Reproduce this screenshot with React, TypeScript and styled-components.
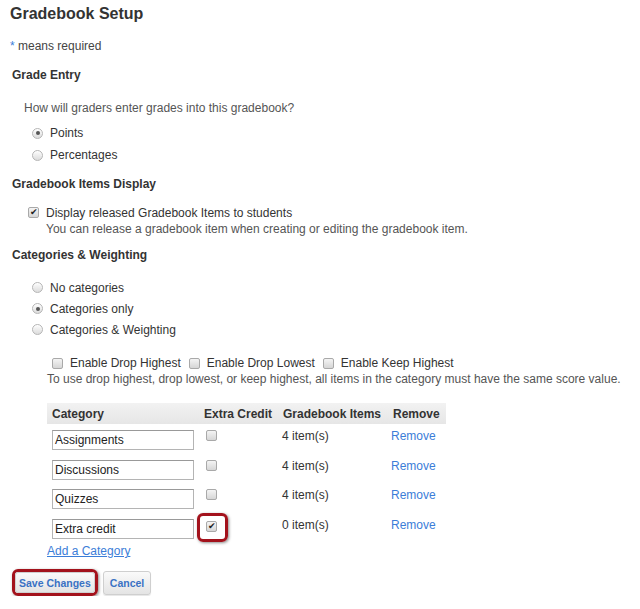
import React from "react";
import styled, { createGlobalStyle, css } from "styled-components";

const GlobalStyle = createGlobalStyle`
  body {
    margin: 0;
    background: #fff;
    font-family: "Liberation Sans", Arial, sans-serif;
    font-size: 12px;
    color: #333;
  }
`;

const Page = styled.div`
  padding: 4px 10px 0 10px;
`;

const Title = styled.h1`
  margin: 0;
  font-size: 16px;
  line-height: 20px;
  font-weight: bold;
  color: #333;
`;

const Required = styled.p`
  margin: 14px 0 0;
  line-height: 16px;
  color: #444;
  span {
    color: #3b7dd8;
  }
`;

const Heading = styled.h2<{ $top: number }>`
  margin: ${(p) => p.$top}px 0 0 2px;
  font-size: 12px;
  line-height: 16px;
  font-weight: bold;
  color: #333;
`;

const Question = styled.p`
  margin: 17px 0 0 14px;
  line-height: 16px;
  color: #555;
`;

const OptionList = styled.div<{ $top: number; $row: number }>`
  margin: ${(p) => p.$top}px 0 0 22px;
  display: flex;
  flex-direction: column;
  > label {
    height: ${(p) => p.$row}px;
  }
`;

const Option = styled.label`
  display: flex;
  align-items: center;
  gap: 7px;
  color: #333;
`;

const Radio = styled.span<{ $on?: boolean }>`
  width: 11px;
  height: 11px;
  border-radius: 50%;
  box-sizing: border-box;
  border: 1px solid #b5b5b5;
  background: linear-gradient(#fdfdfd, #dcdcdc);
  box-shadow: inset 0 1px 1px rgba(255, 255, 255, 0.8);
  display: inline-flex;
  align-items: center;
  justify-content: center;
  flex: none;
  ${(p) =>
    p.$on &&
    css`
      &::before {
        content: "";
        width: 4px;
        height: 4px;
        border-radius: 50%;
        background: #555;
      }
    `}
`;

const Box = styled.span<{ $ring?: boolean }>`
  position: relative;
  width: 11px;
  height: 11px;
  box-sizing: border-box;
  border: 1px solid #a9a9a9;
  border-radius: 2px;
  background: linear-gradient(#f4f4f4, #d6d6d6);
  display: inline-flex;
  align-items: center;
  justify-content: center;
  flex: none;
  font-size: 9px;
  line-height: 1;
  color: #222;
  ${(p) =>
    p.$ring &&
    css`
      &::after {
        content: "";
        position: absolute;
        left: -10px;
        top: -9px;
        width: 25px;
        height: 23px;
        border: 3px solid #a3121c;
        border-radius: 6px;
        box-shadow: 1px 1px 3px rgba(0, 0, 0, 0.45);
      }
    `}
`;

const CheckRow = styled.div`
  margin: 13px 0 0 18px;
  display: flex;
  gap: 7px;
  line-height: 16px;
  > span:first-child {
    margin-top: 2px;
  }
`;

const Hint = styled.div`
  color: #555;
  line-height: 16px;
`;

const DropOptions = styled.div`
  margin: 15px 0 0 37px;
  line-height: 16px;
`;

const DropRow = styled.div`
  margin-left: 5px;
  display: flex;
  align-items: center;
  gap: 8px;
  > label {
    display: flex;
    align-items: center;
    gap: 7px;
  }
`;

const DropHint = styled.div`
  color: #555;
`;

const Table = styled.table`
  margin: 16px 0 0 37px;
  border-collapse: collapse;
  table-layout: fixed;
  width: 399px;
`;

const HeadCell = styled.th<{ $w: number }>`
  width: ${(p) => p.$w}px;
  height: 21px;
  padding: 0 0 0 5px;
  box-sizing: border-box;
  text-align: left;
  white-space: nowrap;
  font-size: 12px;
  font-weight: bold;
  color: #333;
  background: linear-gradient(#f2f2f2, #e6e6e6);
`;

const Cell = styled.td<{ $pl?: number }>`
  padding: 6px 0 3.5px ${(p) => p.$pl ?? 5}px;
  vertical-align: top;
  line-height: 12px;
  white-space: nowrap;
`;

const NameInput = styled.div`
  width: 142px;
  height: 20px;
  box-sizing: border-box;
  border: 1px solid #b4b4b4;
  border-top-color: #999;
  padding: 0 2px;
  line-height: 19px;
  font-size: 12px;
  color: #222;
  background: #fff;
`;

const Link = styled.a`
  color: #3b7dd8;
  text-decoration: none;
  cursor: pointer;
`;

const AddLink = styled(Link)`
  display: block;
  margin: 1px 0 0 37px;
  line-height: 16px;
  text-decoration: underline;
`;

const Buttons = styled.div`
  margin: 10px 0 0 2px;
  display: flex;
  align-items: center;
  gap: 5px;
`;

const Ring = styled.span`
  display: inline-flex;
  border: 3px solid #a3121c;
  border-radius: 6px;
  box-shadow: 1px 1px 3px rgba(0, 0, 0, 0.45);
`;

const Button = styled.button`
  height: 21px;
  padding: 0 3px;
  border: 1px solid #cfcfcf;
  border-radius: 3px;
  background: linear-gradient(#fafafa, #e4e4e4);
  font-family: "Liberation Sans", Arial, sans-serif;
  font-size: 10.5px;
  font-weight: bold;
  color: #3a72c4;
`;

const CancelButton = styled(Button)`
  height: 24px;
  padding: 0 6px;
  box-shadow: 0 1px 1px rgba(0, 0, 0, 0.1);
`;

const categories = [
  { name: "Assignments", items: 4, extra: false },
  { name: "Discussions", items: 4, extra: false },
  { name: "Quizzes", items: 4, extra: false },
  { name: "Extra credit", items: 0, extra: true },
];

export default function App() {
  return (
    <Page>
      <GlobalStyle />
      <Title>Gradebook Setup</Title>
      <Required>
        <span>*</span> means required
      </Required>

      <Heading $top={13}>Grade Entry</Heading>
      <Question>How will graders enter grades into this gradebook?</Question>
      <OptionList $top={6} $row={22}>
        <Option>
          <Radio $on />
          Points
        </Option>
        <Option>
          <Radio />
          Percentages
        </Option>
      </OptionList>

      <Heading $top={10}>Gradebook Items Display</Heading>
      <CheckRow>
        <Box>✔</Box>
        <div>
          <div>Display released Gradebook Items to students</div>
          <Hint>You can release a gradebook item when creating or editing the gradebook item.</Hint>
        </div>
      </CheckRow>

      <Heading $top={10}>Categories &amp; Weighting</Heading>
      <OptionList $top={14} $row={21}>
        <Option>
          <Radio />
          No categories
        </Option>
        <Option>
          <Radio $on />
          Categories only
        </Option>
        <Option>
          <Radio />
          Categories &amp; Weighting
        </Option>
      </OptionList>

      <DropOptions>
        <DropRow>
          <label>
            <Box />
            Enable Drop Highest
          </label>
          <label>
            <Box />
            Enable Drop Lowest
          </label>
          <label>
            <Box />
            Enable Keep Highest
          </label>
        </DropRow>
        <DropHint>
          To use drop highest, drop lowest, or keep highest, all items in the category must have the same score value.
        </DropHint>
      </DropOptions>

      <Table>
        <thead>
          <tr>
            <HeadCell $w={152}>Category</HeadCell>
            <HeadCell $w={79}>Extra Credit</HeadCell>
            <HeadCell $w={110}>Gradebook Items</HeadCell>
            <HeadCell $w={58}>Remove</HeadCell>
          </tr>
        </thead>
        <tbody>
          {categories.map((c) => (
            <tr key={c.name}>
              <Cell>
                <NameInput>{c.name}</NameInput>
              </Cell>
              <Cell $pl={7}>
                <Box $ring={c.extra}>{c.extra ? "✔" : null}</Box>
              </Cell>
              <Cell $pl={4}>{c.items} item(s)</Cell>
              <Cell $pl={3}>
                <Link>Remove</Link>
              </Cell>
            </tr>
          ))}
        </tbody>
      </Table>
      <AddLink>Add a Category</AddLink>

      <Buttons>
        <Ring>
          <Button>Save Changes</Button>
        </Ring>
        <CancelButton>Cancel</CancelButton>
      </Buttons>
    </Page>
  );
}
